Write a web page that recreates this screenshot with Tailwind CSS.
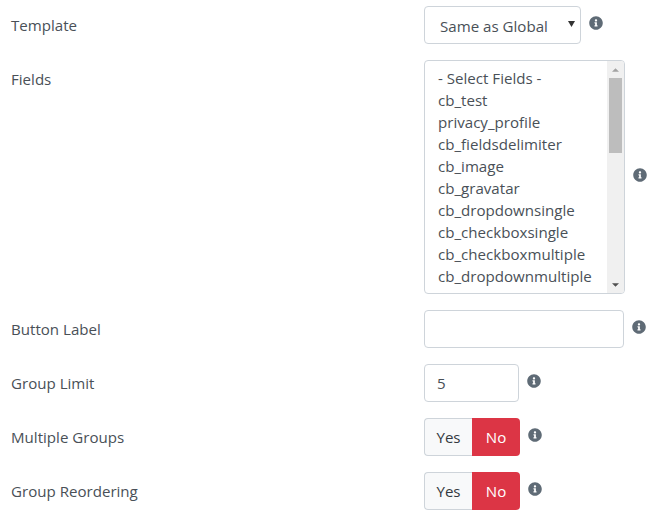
<!DOCTYPE html>
<html>
<head>
<meta charset="utf-8">
<script src="https://cdn.jsdelivr.net/npm/@tailwindcss/browser@4"></script>
</head>
<body class="bg-white font-['Open_Sans','Noto_Sans',sans-serif] text-[15.1px] text-[#495057] overflow-hidden">
<div class="flex flex-col gap-4 pt-[6px] pl-[11px]">

  <div class="flex">
    <div class="w-[413px] pt-2 leading-[22px]">Template</div>
    <div class="flex items-center gap-2">
      <div class="w-[157px] h-[38px] border border-[#ced4da] rounded flex items-center justify-between pl-[15px] pr-[5px]">
        <span class="pt-0.5">Same as Global</span>
        <svg class="w-[7px] h-[7px] mb-1" viewBox="0 0 8 8"><path d="M0 1h8L4 8z" fill="#333"/></svg>
      </div>
      <svg class="w-[14px] h-[14px] mb-1 fill-[#5f6b76]" viewBox="0 0 512 512"><path d="M256 8C119.043 8 8 119.083 8 256c0 136.997 111.043 248 248 248s248-111.003 248-248C504 119.083 392.957 8 256 8zm0 110c23.196 0 42 18.804 42 42s-18.804 42-42 42-42-18.804-42-42 18.804-42 42-42zm56 254c0 6.627-5.373 12-12 12h-88c-6.627 0-12-5.373-12-12v-24c0-6.627 5.373-12 12-12h12v-64h-12c-6.627 0-12-5.373-12-12v-24c0-6.627 5.373-12 12-12h64c6.627 0 12 5.373 12 12v100h12c6.627 0 12 5.373 12 12v24z"/></svg>
    </div>
  </div>

  <div class="flex">
    <div class="w-[413px] pt-2 leading-[22px]">Fields</div>
    <div class="flex items-center gap-2">
      <div class="w-[201px] h-[234px] border border-[#ced4da] rounded flex overflow-hidden">
        <div class="flex-1 pl-[13px] pt-[6px] leading-[22px] overflow-hidden whitespace-nowrap">
          <div>- Select Fields -</div>
          <div>cb_test</div>
          <div>privacy_profile</div>
          <div>cb_fieldsdelimiter</div>
          <div>cb_image</div>
          <div>cb_gravatar</div>
          <div>cb_dropdownsingle</div>
          <div>cb_checkboxsingle</div>
          <div>cb_checkboxmultiple</div>
          <div>cb_dropdownmultiple</div>
          <div>cb_emailfield</div>
        </div>
        <div class="w-[17px] bg-[#f0f0f0] flex flex-col">
          <div class="h-[17px] flex items-center justify-center"><svg class="w-[7px] h-[4px]" viewBox="0 0 8 4"><path d="M4 0l4 4H0z" fill="#a3a3a3"/></svg></div>
          <div class="h-[75px] bg-[#bdbdbd] mx-[2px]"></div>
          <div class="flex-1"></div>
          <div class="h-[17px] flex items-center justify-center"><svg class="w-[7px] h-[4px]" viewBox="0 0 8 4"><path d="M0 0h8L4 4z" fill="#505050"/></svg></div>
        </div>
      </div>
      <svg class="w-[14px] h-[14px] mb-1 fill-[#5f6b76]" viewBox="0 0 512 512"><path d="M256 8C119.043 8 8 119.083 8 256c0 136.997 111.043 248 248 248s248-111.003 248-248C504 119.083 392.957 8 256 8zm0 110c23.196 0 42 18.804 42 42s-18.804 42-42 42-42-18.804-42-42 18.804-42 42-42zm56 254c0 6.627-5.373 12-12 12h-88c-6.627 0-12-5.373-12-12v-24c0-6.627 5.373-12 12-12h12v-64h-12c-6.627 0-12-5.373-12-12v-24c0-6.627 5.373-12 12-12h64c6.627 0 12 5.373 12 12v100h12c6.627 0 12 5.373 12 12v24z"/></svg>
    </div>
  </div>

  <div class="flex">
    <div class="w-[413px] pt-2 leading-[22px]">Button Label</div>
    <div class="flex items-center gap-2">
      <div class="w-[200px] h-[38px] border border-[#ced4da] rounded"></div>
      <svg class="w-[14px] h-[14px] mb-1 fill-[#5f6b76]" viewBox="0 0 512 512"><path d="M256 8C119.043 8 8 119.083 8 256c0 136.997 111.043 248 248 248s248-111.003 248-248C504 119.083 392.957 8 256 8zm0 110c23.196 0 42 18.804 42 42s-18.804 42-42 42-42-18.804-42-42 18.804-42 42-42zm56 254c0 6.627-5.373 12-12 12h-88c-6.627 0-12-5.373-12-12v-24c0-6.627 5.373-12 12-12h12v-64h-12c-6.627 0-12-5.373-12-12v-24c0-6.627 5.373-12 12-12h64c6.627 0 12 5.373 12 12v100h12c6.627 0 12 5.373 12 12v24z"/></svg>
    </div>
  </div>

  <div class="flex">
    <div class="w-[413px] pt-2 leading-[22px]">Group Limit</div>
    <div class="flex items-center gap-2">
      <div class="w-[95px] h-[38px] border border-[#ced4da] rounded flex items-center pl-[12px]">5</div>
      <svg class="w-[14px] h-[14px] mb-1 fill-[#5f6b76]" viewBox="0 0 512 512"><path d="M256 8C119.043 8 8 119.083 8 256c0 136.997 111.043 248 248 248s248-111.003 248-248C504 119.083 392.957 8 256 8zm0 110c23.196 0 42 18.804 42 42s-18.804 42-42 42-42-18.804-42-42 18.804-42 42-42zm56 254c0 6.627-5.373 12-12 12h-88c-6.627 0-12-5.373-12-12v-24c0-6.627 5.373-12 12-12h12v-64h-12c-6.627 0-12-5.373-12-12v-24c0-6.627 5.373-12 12-12h64c6.627 0 12 5.373 12 12v100h12c6.627 0 12 5.373 12 12v24z"/></svg>
    </div>
  </div>

  <div class="flex">
    <div class="w-[413px] pt-2 leading-[22px]">Multiple Groups</div>
    <div class="flex items-center gap-2">
      <div class="flex h-[38px] w-[96px]">
        <div class="w-[48px] bg-[#f8f9fa] border border-r-0 border-[#ced4da] rounded-l flex items-center justify-center text-[#343a40]">Yes</div>
        <div class="w-[48px] bg-[#dc3545] rounded-r flex items-center justify-center text-white">No</div>
      </div>
      <svg class="w-[14px] h-[14px] mb-1 fill-[#5f6b76]" viewBox="0 0 512 512"><path d="M256 8C119.043 8 8 119.083 8 256c0 136.997 111.043 248 248 248s248-111.003 248-248C504 119.083 392.957 8 256 8zm0 110c23.196 0 42 18.804 42 42s-18.804 42-42 42-42-18.804-42-42 18.804-42 42-42zm56 254c0 6.627-5.373 12-12 12h-88c-6.627 0-12-5.373-12-12v-24c0-6.627 5.373-12 12-12h12v-64h-12c-6.627 0-12-5.373-12-12v-24c0-6.627 5.373-12 12-12h64c6.627 0 12 5.373 12 12v100h12c6.627 0 12 5.373 12 12v24z"/></svg>
    </div>
  </div>

  <div class="flex">
    <div class="w-[413px] pt-2 leading-[22px]">Group Reordering</div>
    <div class="flex items-center gap-2">
      <div class="flex h-[38px] w-[96px]">
        <div class="w-[48px] bg-[#f8f9fa] border border-r-0 border-[#ced4da] rounded-l flex items-center justify-center text-[#343a40]">Yes</div>
        <div class="w-[48px] bg-[#dc3545] rounded-r flex items-center justify-center text-white">No</div>
      </div>
      <svg class="w-[14px] h-[14px] mb-1 fill-[#5f6b76]" viewBox="0 0 512 512"><path d="M256 8C119.043 8 8 119.083 8 256c0 136.997 111.043 248 248 248s248-111.003 248-248C504 119.083 392.957 8 256 8zm0 110c23.196 0 42 18.804 42 42s-18.804 42-42 42-42-18.804-42-42 18.804-42 42-42zm56 254c0 6.627-5.373 12-12 12h-88c-6.627 0-12-5.373-12-12v-24c0-6.627 5.373-12 12-12h12v-64h-12c-6.627 0-12-5.373-12-12v-24c0-6.627 5.373-12 12-12h64c6.627 0 12 5.373 12 12v100h12c6.627 0 12 5.373 12 12v24z"/></svg>
    </div>
  </div>

</div>
</body>
</html>
